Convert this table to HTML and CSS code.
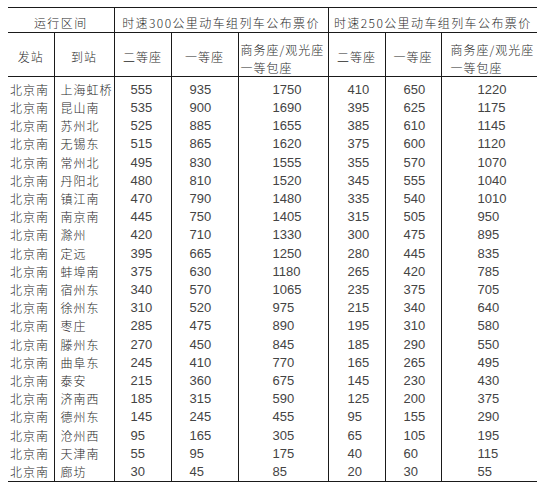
FILE: index.html
```html
<!DOCTYPE html>
<html lang="zh">
<head>
<meta charset="utf-8">
<link rel="stylesheet" href="styles.css">
</head>
<body>
<table class="fares">
<colgroup>
<col class="c1"><col class="c2"><col class="c3"><col class="c4"><col class="c5"><col class="c6"><col class="c7"><col class="c8">
</colgroup>
<thead>
<tr class="h1">
<th colspan="2">运行区间</th>
<th colspan="3">时速300公里动车组列车公布票价</th>
<th colspan="3">时速250公里动车组列车公布票价</th>
</tr>
<tr class="h2">
<th>发站</th>
<th>到站</th>
<th>二等座</th>
<th>一等座</th>
<th class="multi m1"><span class="ln">商务座/观光座</span><span class="ln">一等包座</span></th>
<th>二等座</th>
<th>一等座</th>
<th class="multi m2"><span class="ln">商务座/观光座</span><span class="ln">一等包座</span></th>
</tr>
</thead>
<tbody>
<tr><td>北京南</td><td>上海虹桥</td><td>555</td><td>935</td><td>1750</td><td>410</td><td>650</td><td>1220</td></tr>
<tr><td>北京南</td><td>昆山南</td><td>535</td><td>900</td><td>1690</td><td>395</td><td>625</td><td>1175</td></tr>
<tr><td>北京南</td><td>苏州北</td><td>525</td><td>885</td><td>1655</td><td>385</td><td>610</td><td>1145</td></tr>
<tr><td>北京南</td><td>无锡东</td><td>515</td><td>865</td><td>1620</td><td>375</td><td>600</td><td>1120</td></tr>
<tr><td>北京南</td><td>常州北</td><td>495</td><td>830</td><td>1555</td><td>355</td><td>570</td><td>1070</td></tr>
<tr><td>北京南</td><td>丹阳北</td><td>480</td><td>810</td><td>1520</td><td>345</td><td>555</td><td>1040</td></tr>
<tr><td>北京南</td><td>镇江南</td><td>470</td><td>790</td><td>1480</td><td>335</td><td>540</td><td>1010</td></tr>
<tr><td>北京南</td><td>南京南</td><td>445</td><td>750</td><td>1405</td><td>315</td><td>505</td><td>950</td></tr>
<tr><td>北京南</td><td>滁州</td><td>420</td><td>710</td><td>1330</td><td>300</td><td>475</td><td>895</td></tr>
<tr><td>北京南</td><td>定远</td><td>395</td><td>665</td><td>1250</td><td>280</td><td>445</td><td>835</td></tr>
<tr><td>北京南</td><td>蚌埠南</td><td>375</td><td>630</td><td>1180</td><td>265</td><td>420</td><td>785</td></tr>
<tr><td>北京南</td><td>宿州东</td><td>340</td><td>570</td><td>1065</td><td>235</td><td>375</td><td>705</td></tr>
<tr><td>北京南</td><td>徐州东</td><td>310</td><td>520</td><td>975</td><td>215</td><td>340</td><td>640</td></tr>
<tr><td>北京南</td><td>枣庄</td><td>285</td><td>475</td><td>890</td><td>195</td><td>310</td><td>580</td></tr>
<tr><td>北京南</td><td>滕州东</td><td>270</td><td>450</td><td>845</td><td>185</td><td>290</td><td>550</td></tr>
<tr><td>北京南</td><td>曲阜东</td><td>245</td><td>410</td><td>770</td><td>165</td><td>265</td><td>495</td></tr>
<tr><td>北京南</td><td>泰安</td><td>215</td><td>360</td><td>675</td><td>145</td><td>230</td><td>430</td></tr>
<tr><td>北京南</td><td>济南西</td><td>185</td><td>315</td><td>590</td><td>125</td><td>200</td><td>375</td></tr>
<tr><td>北京南</td><td>德州东</td><td>145</td><td>245</td><td>455</td><td>95</td><td>155</td><td>290</td></tr>
<tr><td>北京南</td><td>沧州西</td><td>95</td><td>165</td><td>305</td><td>65</td><td>105</td><td>195</td></tr>
<tr><td>北京南</td><td>天津南</td><td>55</td><td>95</td><td>175</td><td>40</td><td>60</td><td>115</td></tr>
<tr><td>北京南</td><td>廊坊</td><td>30</td><td>45</td><td>85</td><td>20</td><td>30</td><td>55</td></tr>
</tbody>
</table>
</body>
</html>
```
FILE: styles.css
```css
html, body {
  background: #ffffff;
}
body {
  margin: 7px 8px;
  font-family: "Liberation Sans", "Noto Sans CJK SC", sans-serif;
  color: #222;
}
.fares {
  border-collapse: collapse;
  table-layout: fixed;
  width: 529px;
  border-top: 1px solid #1a1a1a;
  border-bottom: 1px solid #1a1a1a;
}
.c1 { width: 46px; }
.c2 { width: 60px; }
.c3 { width: 57px; }
.c4 { width: 67px; }
.c5 { width: 90px; }
.c6 { width: 57px; }
.c7 { width: 56px; }
.c8 { width: 96px; }

.fares th, .fares td {
  padding: 0;
  border-left: 1px solid #1a1a1a;
  white-space: nowrap;
  overflow: hidden;
}
.fares th:first-child, .fares td:first-child {
  border-left: none;
}
.fares th {
  font-family: "Noto Sans CJK SC", sans-serif;
  font-weight: 300;
  font-size: 12px;
  letter-spacing: 1px;
  color: #2a2a2a;
  text-align: center;
}
.h1 th {
  height: 25px;
  padding-top: 4px;
  box-sizing: border-box;
  letter-spacing: 1.4px;
  border-bottom: 1px solid #1a1a1a;
}
.h2 th {
  height: 44px;
  padding-top: 5px;
  box-sizing: border-box;
  border-bottom: 1px solid #1a1a1a;
  line-height: 14px;
}
.h2 th.multi {
  text-align: left;
  vertical-align: top;
  padding-top: 8px;
}
.h2 th.multi .ln {
  display: block;
  line-height: 17.5px;
  height: 17.5px;
}
.h2 th.m1 { padding-left: 2px; }
.h2 th.m2 { padding-left: 9px; }

.fares td {
  height: 18.2px;
  line-height: 18.2px;
  font-size: 13px;
  color: #444;
  text-align: left;
}
.fares tbody tr:first-child td {
  padding-top: 3.7px;
}
.fares td:nth-child(1),
.fares td:nth-child(2) {
  font-family: "Noto Sans CJK SC", sans-serif;
  font-weight: 300;
  font-size: 12px;
  letter-spacing: 1px;
  color: #2a2a2a;
}
.fares td:nth-child(1) { padding-left: 2px; }
.fares td:nth-child(2) { padding-left: 6px; }
.fares td:nth-child(3) { padding-left: 16px; }
.fares td:nth-child(4) { padding-left: 18px; }
.fares td:nth-child(5) { padding-left: 34px; }
.fares td:nth-child(6) { padding-left: 19px; }
.fares td:nth-child(7) { padding-left: 18px; }
.fares td:nth-child(8) { padding-left: 36px; }
```
